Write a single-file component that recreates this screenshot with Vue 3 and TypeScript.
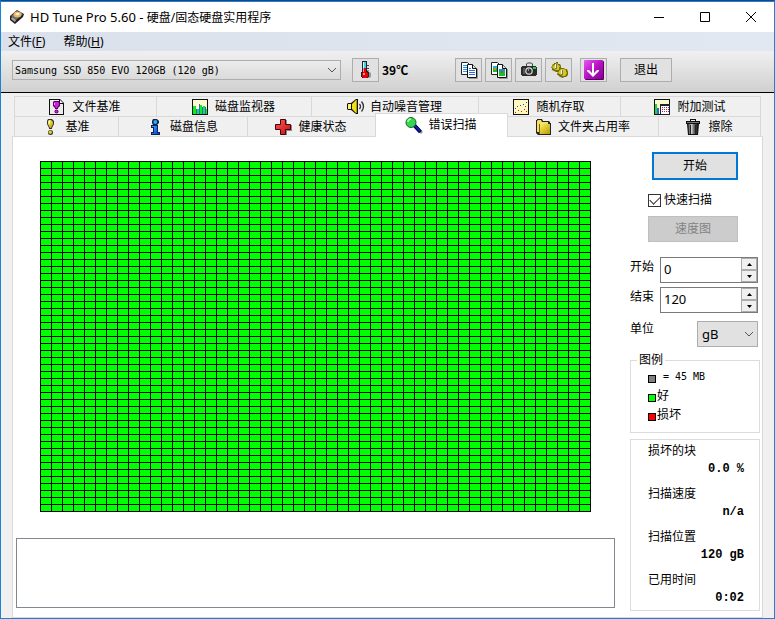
<script setup lang="ts">
import { ref } from 'vue'

interface Tab {
  id: string
  label: string
  icon: string
}

const upperTabs: Tab[] = [
  { id: 'file-benchmark', label: '文件基准', icon: 'file-bench' },
  { id: 'monitor', label: '磁盘监视器', icon: 'monitor' },
  { id: 'aam', label: '自动噪音管理', icon: 'speaker' },
  { id: 'random', label: '随机存取', icon: 'scatter' },
  { id: 'extra', label: '附加测试', icon: 'extra' },
]
const lowerTabs: Tab[] = [
  { id: 'benchmark', label: '基准', icon: 'exclaim' },
  { id: 'info', label: '磁盘信息', icon: 'info' },
  { id: 'health', label: '健康状态', icon: 'cross' },
  { id: 'error-scan', label: '错误扫描', icon: 'lens' },
  { id: 'folder', label: '文件夹占用率', icon: 'folder' },
  { id: 'erase', label: '擦除', icon: 'trash' },
]
const tools = [
  { icon: 'copy-text', label: '复制文本' },
  { icon: 'copy-image', label: '复制图像' },
  { icon: 'camera', label: '屏幕截图' },
  { icon: 'options', label: '选项' },
]
const stats = [
  { label: '损坏的块', value: '0.0 %' },
  { label: '扫描速度', value: 'n/a' },
  { label: '扫描位置', value: '120 gB' },
  { label: '已用时间', value: '0:02' },
]

const active = ref('error-scan')
const drive = ref('Samsung SSD 850 EVO 120GB (120 gB)')
const quickScan = ref(true)
const from = ref(0)
const to = ref(120)
const unit = ref('gB')
const blockCount = 50 * 50
</script>

<template>
  <div class="window">
    <svg class="sprite" aria-hidden="true">
      <defs>
        <linearGradient id="g-blue" x1="0" y1="0" x2="1" y2="1"><stop offset="0" stop-color="#39a8ff" /><stop offset="1" stop-color="#0038d0" /></linearGradient>
        <linearGradient id="g-yellow" x1="0" y1="0" x2="1" y2="1"><stop offset="0" stop-color="#fff36b" /><stop offset="1" stop-color="#b79a00" /></linearGradient>
        <linearGradient id="g-purple" x1="0" y1="0" x2="1" y2="1"><stop offset="0" stop-color="#e65af0" /><stop offset=".5" stop-color="#b812c4" /><stop offset="1" stop-color="#84008f" /></linearGradient>
        <linearGradient id="g-metal" x1="0" y1="0" x2="1" y2="0"><stop offset="0" stop-color="#333" /><stop offset=".35" stop-color="#ccc" /><stop offset=".6" stop-color="#666" /><stop offset="1" stop-color="#111" /></linearGradient>
        <linearGradient id="g-red" x1="0" y1="0" x2="1" y2="1"><stop offset="0" stop-color="#ff5a50" /><stop offset="1" stop-color="#c40d12" /></linearGradient>
      </defs>
      <symbol id="drive" viewBox="0 0 16 16">
        <path d="M1 7 8 1l7 4-1 3-8 7-5-4z" fill="#222" />
        <path d="m2 7 6-5 6 3-7 6z" fill="#75706a" />
        <ellipse cx="8.5" cy="5.500" rx="4" ry="3" fill="#e9b56c" /><ellipse cx="8.5" cy="5" rx="2" ry="1.3" fill="#fff2cf" />
        <path d="m2 10 4 3 1-2-4-3z" fill="#aaa" />
      </symbol>
      <symbol id="thermo" viewBox="0 0 18 18">
        <path d="M9 9h2v2l2 1v4l-2 1H9z" fill="#999" />
        <path d="M4 0h5v10h1v1h1v5h-1v1H4v-1H3v-5h1z" fill="#223" />
        <path d="M5 1h3v6H5z" fill="#35d5e8" /><path d="M5 1h1v6H5z" fill="#c9fbff" />
        <path d="M5 7h3v4h1v1h1v4H9v1H5v-1H4v-4h1z" fill="#e60000" /><path d="M5 12h2v2H5zM5 7h1v4H5z" fill="#ff8f86" />
        <path d="M9 7.500h2M9 4.500h2" stroke="#444" />
      </symbol>
      <symbol id="copy-text" viewBox="0 -1 18 18">
        <path d="M.5.5h6l2 2v10h-8z" fill="#fff" stroke="#222" /><path d="M2 3.5h4M2 5.500h4M2 7.500h4M2 9.500h4" stroke="#2496f2" />
        <path d="M6.500 2.500h5l4 4v9h-9z" fill="#fff" stroke="#111" /><path d="M16.500 7v9.500H8" fill="none" stroke="#999" /><path d="M11.500 2.500v4h4" fill="#ddd" stroke="#111" /><path d="M8 6.500h2M8 8.500h6M8 10.500h6M8 12.500h6" stroke="#286ee8" />
      </symbol>
      <symbol id="copy-image" viewBox="0 -1 18 18">
        <path d="M.5.5h6l2 2v10h-8z" fill="#fff" stroke="#222" /><path d="M2 4h4v6H2z" fill="#0ac52e" /><path d="M2 4h4v2H2z" fill="#17b9e8" /><path d="M3 6h2v2H3z" fill="#e38b0c" />
        <path d="M6.500 2.500h5l4 4v9h-9z" fill="#fff" stroke="#111" /><path d="M16.500 7v9.500H8" fill="none" stroke="#999" /><path d="M11.500 2.500v4h4" fill="#ddd" stroke="#111" /><path d="M8 7h6v7H8z" fill="#0ac52e" /><path d="M8 7h6v2H8z" fill="#168ee6" /><path d="M10 9h2v2h-2z" fill="#e33b0c" />
      </symbol>
      <symbol id="camera" viewBox="0 -1 18 18">
        <path d="M5.500 4V2l1-1h4l1 1v2" fill="none" stroke="#444" /><path d="M1 4h14v1h1v8h-1v1H1v-1H0V5h1z" fill="#2b2b2b" /><path d="M2 6h2v6H2z" fill="#555" />
        <circle cx="8" cy="9" r="3.800" fill="#ddd" /><circle cx="8" cy="9" r="2.600" fill="#333" /><path d="M7 7h1v2H7z" fill="#999" /><path d="M12 5h3v2h-3z" fill="#18d538" />
      </symbol>
      <symbol id="options" viewBox="0 -1 18 18">
        <path d="m1 4 1-2h1V1h2V0h2v2h2l1 2v2l-1 3-2 1H5L3 9 1 8V6H0zM7 9l1-2 2-1h3l1 1h2l1 3v3l-2 2h-2l-1 1-3-1-2-2H6z" fill="#756d00" />
        <path d="m2 4 1-1 3-2 1 2 2 1-1 2v2H5L3 7 1 5zM8 9l2-2h3l2 1v2l1 1-2 3h-2l-2-1-3-2z" fill="#d9c91c" />
        <path d="M4 2h2v5H4zM10 8h2v5h-2z" fill="#777" /><path d="M4 2h1v4H4zM10 8h1v4h-1z" fill="#eee" />
      </symbol>
      <symbol id="download" viewBox="0 0 20 20">
        <rect x="1" y="1" width="19" height="19" rx="1" fill="#5b0062" /><rect width="19" height="19" rx="1" fill="url(#g-purple)" />
        <path d="M8 3h2v10l3-3h2v1l-6 6-6-6v-1h2l3 3z" fill="#fff" />
      </symbol>
      <symbol id="file-bench" viewBox="0 -1 18 18">
        <path d="M0 0h11l4 4v12H0z" fill="#111" /><path d="M1 1h9v4h4v10H1z" fill="#ececec" /><path d="M11 1v3h3z" fill="#fff" />
        <path d="M5 2h5l1 1v4L9 9v1H6V9L4 7V3z" fill="#53005a" /><path d="M5 3h4l1 1v2L8 9H7L5 6z" fill="#d31bdf" /><circle cx="7.500" cy="12.500" r="2" fill="#53005a" /><circle cx="7.500" cy="12.500" r="1.200" fill="#d31bdf" /><path d="M5 4h1v2H5z" fill="#ffa0ff" />
      </symbol>
      <symbol id="monitor" viewBox="0 -1 18 18">
        <path d="M0 0h16v16H0z" fill="#111" /><path d="M1 1h14v14H1z" fill="#fffbd0" />
        <path d="M1 7h3v8H1zM5 10h2v5H5zM8 6h2v9H8zM11 7h2v8h-2zM14 10h1v5h-1z" fill="#08ef22" /><path d="M4 10h1v5H4zM7 5h1v10H7zM10 8h1v7h-1zM13 8h1v7h-1z" fill="#4355f2" />
      </symbol>
      <symbol id="speaker" viewBox="0 -1 18 18">
        <path d="M1 4h3l5-4h2v15H9l-5-4H1l-1-1V5z" fill="#111" /><path d="M1 5h3v5H1z" fill="#fff36b" /><path d="m5 5 4-4v13l-4-4z" fill="#f2df19" /><path d="M9 1h1v13H9z" fill="#b79a00" /><path d="M12.500 5q2 2.500 0 5M14.500 2.500q4 5 0 10" fill="none" stroke="#333" stroke-width="1.300" />
      </symbol>
      <symbol id="scatter" viewBox="0 -1 18 18">
        <path d="M0 0h16v16H0z" fill="#111" /><path d="M1 1h14v14H1z" fill="#fff9bd" />
        <path d="M2 9h1v1H2zM4 7h1v1H4zM7 6h1v1H7zM10 5h1v1h-1zM13 3h1v1h-1zM12 7h1v1h-1z" fill="#24e" /><path d="M2 13h1v1H2zM5 11h1v1H5zM8 12h1v1H8zM11 10h1v1h-1zM13 12h1v1h-1z" fill="#e11" />
      </symbol>
      <symbol id="extra" viewBox="0 -1 18 18">
        <path d="M0 0h16v16H0z" fill="#111" /><path d="M1 1h14v14H1z" fill="#fffbd0" /><path d="M1 5h2v10H1z" fill="#16dc2a" /><path d="M3 9h2v6H3z" fill="#4355f2" />
        <path d="M6 5h10v11H6z" fill="#222" /><path d="M7 7h8v8H7z" fill="#fff" /><path d="M8 8.500h7M8 10.500h7M8 12.500h7" stroke="#d12" stroke-dasharray="1 1" /><path d="M10 8.500h5M10 12.500h5" stroke="#35d" stroke-dasharray="1 3" />
      </symbol>
      <symbol id="exclaim" viewBox="0 -1 18 18">
        <path d="M6 0h4l2 2v3l-2 4v1H7V9L5 5V2z" fill="#333" /><path d="M7 1h2l2 2v2L9 9H8L6 5V2z" fill="url(#g-yellow)" /><circle cx="8.500" cy="13.500" r="2.500" fill="#333" /><circle cx="8.300" cy="13.200" r="1.600" fill="#e8d61c" /><path d="M7 2h1v3H7z" fill="#fffbc0" />
      </symbol>
      <symbol id="info" viewBox="0 -1 18 18">
        <path d="M6 0h4l2 2v2l-2 2H6L5 4V2zM4 6h7v7h2v3H4v-3h2V9H4z" fill="#102050" /><circle cx="8.300" cy="3" r="2" fill="#26aeea" /><path d="M5 7h5v7h2v1H5v-1h2V8H5z" fill="url(#g-blue)" />
      </symbol>
      <symbol id="cross" viewBox="0 -1 18 18">
        <path d="M6 1h6v5h5v6h-5v4H6z" fill="#888" /><path d="M5.500.5h5v5h5v5h-5v5h-5v-5h-5v-5h5z" fill="url(#g-red)" stroke="#401" />
      </symbol>
      <symbol id="lens" viewBox="0 -1 18 18">
        <path d="m10 9 7 7" stroke="#999" stroke-width="3" /><path d="m9 8 6.500 7" stroke="#00005c" stroke-width="4" /><path d="m9 8 6 6" stroke="#1220c8" stroke-width="1.500" /><circle cx="6" cy="5.500" r="5" fill="#35d84b" stroke="#176323" /><path d="M3 5q0-3 3-3" fill="none" stroke="#bcffc3" stroke-width="1.500" />
      </symbol>
      <symbol id="folder" viewBox="0 -1 18 18">
        <path d="M1 1h1V0h5l1 2h6l1 1v1h1v12H3l-2-2z" fill="#222" /><path d="M2 3V2l1-1h3l1 2h6v2H4v8H2z" fill="#f7df62" /><path d="M4 5h11v10H4z" fill="url(#g-yellow)" /><path d="M4 5h1v10H4z" fill="#7b6204" />
      </symbol>
      <symbol id="trash" viewBox="0 -1 18 18">
        <path d="M1 2h4V0h6v2h4v3h-1l-1 11H3L2 5H1z" fill="#111" /><path d="M6 1h4v1H6z" fill="#eee" /><path d="M3 5h10l-1 10H4z" fill="url(#g-metal)" /><path d="M2 3.500h12" stroke="#777" /><path d="M5.500 6v9M10.500 6v9" stroke="#222" />
      </symbol>
    </svg>

    <header class="titlebar">
      <svg class="app-icon"><use href="#drive" /></svg>
      <h1><span>HD Tune Pro 5.60 - </span>硬盘/固态硬盘实用程序</h1>
      <button class="caption" aria-label="最小化"><svg viewBox="0 0 12 12"><path d="M1 6.500h10" /></svg></button>
      <button class="caption" aria-label="最大化"><svg viewBox="0 0 12 12"><path d="M1.500 1.500h9v9h-9z" /></svg></button>
      <button class="caption" aria-label="关闭"><svg viewBox="0 0 12 12"><path d="m1 1 10 10M11 1 1 11" /></svg></button>
    </header>

    <nav class="menu">
      <button>文件(<u>F</u>)</button>
      <button>帮助(<u>H</u>)</button>
    </nav>

    <div class="toolbar">
      <div class="drop drive">
        <select v-model="drive" aria-label="驱动器"><option>Samsung SSD 850 EVO 120GB (120 gB)</option></select>
        <svg viewBox="0 0 10 6"><path d="m1 1 4 4 4-4" /></svg>
      </div>
      <button class="tool" aria-label="温度"><svg class="ico"><use href="#thermo" /></svg></button>
      <output class="temp">39℃</output>
      <div class="tools">
        <button v-for="t in tools" :key="t.icon" class="tool" :aria-label="t.label"><svg class="ico"><use :href="'#' + t.icon" /></svg></button>
      </div>
      <button class="tool save" aria-label="保存"><svg class="ico"><use href="#download" /></svg></button>
      <button class="exit">退出</button>
    </div>

    <main class="body">
      <div class="tabs" role="tablist">
        <div class="row upper">
          <button v-for="t in upperTabs" :key="t.id" role="tab" class="tab" :aria-selected="active === t.id" @click="active = t.id">
            <svg class="ico"><use :href="'#' + t.icon" /></svg>{{ t.label }}
          </button>
        </div>
        <div class="row lower">
          <button v-for="t in lowerTabs" :key="t.id" role="tab" class="tab" :class="{ active: active === t.id }" :aria-selected="active === t.id" @click="active = t.id">
            <svg class="ico"><use :href="'#' + t.icon" /></svg>{{ t.label }}
          </button>
        </div>
      </div>

      <section class="panel">
        <div class="scan">
          <div class="board"><i v-for="n in blockCount" :key="n"></i></div>
          <div class="log"></div>
        </div>

        <aside class="side">
          <div class="actions">
            <button class="start">开始</button>
            <label class="check">
              <input v-model="quickScan" type="checkbox" />
              <span>快速扫描</span>
            </label>
            <button class="speed" disabled>速度图</button>
          </div>

          <div class="form">
            <label for="from">开始</label>
            <div class="spin">
              <input id="from" v-model.number="from" type="text" />
              <button aria-label="增加开始" @click="from++"><svg viewBox="0 0 5 3"><path d="M0 3h5L2.500 0z" /></svg></button>
              <button aria-label="减少开始" @click="from--"><svg viewBox="0 0 5 3"><path d="M0 0h5L2.500 3z" /></svg></button>
            </div>
            <label for="to">结束</label>
            <div class="spin">
              <input id="to" v-model.number="to" type="text" />
              <button aria-label="增加结束" @click="to++"><svg viewBox="0 0 5 3"><path d="M0 3h5L2.500 0z" /></svg></button>
              <button aria-label="减少结束" @click="to--"><svg viewBox="0 0 5 3"><path d="M0 0h5L2.500 3z" /></svg></button>
            </div>
            <label for="unit">单位</label>
            <div class="drop unit">
              <select id="unit" v-model="unit"><option>gB</option></select>
              <svg viewBox="0 0 10 6"><path d="m1 1 4 4 4-4" /></svg>
            </div>
          </div>

          <fieldset class="legend">
            <legend>图例</legend>
            <ul>
              <li><b class="swatch size"></b><span class="mono">= 45 MB</span></li>
              <li><b class="swatch good"></b>好</li>
              <li><b class="swatch bad"></b>损坏</li>
            </ul>
          </fieldset>

          <dl class="stats">
            <div v-for="s in stats" :key="s.label">
              <dt>{{ s.label }}</dt>
              <dd>{{ s.value }}</dd>
            </div>
          </dl>
        </aside>
      </section>
    </main>
  </div>
</template>

<style>
body {
  margin: 0;
}
</style>

<style scoped>
* {
  box-sizing: border-box;
}
.window {
  display: flex;
  flex-direction: column;
  min-height: 100vh;
  border: 1px solid #1883d7;
  border-top-color: #243f7c;
  background: #f0f0f0;
  color: #000;
  font: 12px/16px 'Noto Sans', 'Noto Sans CJK SC', sans-serif;
}
button,
input,
select {
  margin: 0;
  padding: 0;
  font: inherit;
  color: inherit;
  border-radius: 0;
}
.sprite {
  position: absolute;
  width: 0;
  height: 0;
}
.titlebar {
  display: flex;
  align-items: center;
  height: 31px;
  padding-left: 8px;
  border-top: 1px solid #1883d7;
  background: #fff;
}
.app-icon {
  width: 16px;
  height: 16px;
}
h1 {
  flex: 1;
  margin: 0 0 0 5px;
  font-size: 12px;
  font-weight: 400;
  white-space: nowrap;
}
h1 span {
  font-size: 13px;
}
.caption {
  display: grid;
  place-items: center;
  width: 46px;
  height: 28px;
  border: 0;
  background: none;
}
.caption svg {
  width: 12px;
  height: 12px;
  fill: none;
  stroke: #000;
}
.menu {
  display: flex;
  gap: 18px;
  height: 19px;
  padding-left: 7px;
  background: linear-gradient(90deg, #dae1eb, #e1e8f1);
}
.menu button {
  border: 0;
  background: none;
}
.toolbar {
  display: flex;
  align-items: flex-start;
  height: 42px;
  padding: 7px 102px 0 11px;
  border-bottom: 1px solid #000;
  background: linear-gradient(#f0f0f0, #d0d0d0);
}
.drop {
  position: relative;
  display: flex;
}
.drop select {
  width: 100%;
  padding: 0 4px;
  border: 1px solid #adadad;
  background: #e1e1e1;
  appearance: none;
}
.drop svg {
  position: absolute;
  right: 4px;
  top: 50%;
  width: 10px;
  height: 6px;
  margin-top: -3px;
  fill: none;
  stroke: #555;
  pointer-events: none;
}
.drive {
  flex: 1;
  height: 20px;
  margin: 2px 11px 0 0;
}
.drive select {
  padding: 1px 2px 0;
  background: linear-gradient(#ececec, #dadada);
  font: 10px/16px 'DejaVu Sans Mono', monospace;
}
.tool,
.exit,
.speed {
  border: 1px solid #adadad;
  background: #e1e1e1;
}
.tool {
  display: flex;
  width: 27px;
  height: 24px;
  padding: 2px 0 0 5px;
}
.ico {
  flex: none;
  width: 18px;
  height: 18px;
}
.save {
  padding: 1px 0 0 3px;
}
.save .ico {
  width: 20px;
  height: 20px;
}
.temp {
  width: 76px;
  padding: 4px 0 0 3px;
  font-family: 'Noto Sans CJK SC', sans-serif;
  font-weight: 700;
}
.tools {
  display: flex;
  gap: 3px;
  margin-right: 8px;
}
.exit {
  width: 52px;
  height: 24px;
  margin-left: 13px;
}
.body {
  display: flex;
  flex: 1;
  flex-direction: column;
  padding: 3px 11px 0;
}
.tabs {
  padding: 0 2px;
}
.row {
  display: grid;
  border-left: 1px solid #d9d9d9;
}
.upper {
  grid-template-columns: 142fr 155fr 167fr 142fr 140fr;
  border-top: 1px solid #d9d9d9;
}
.lower {
  grid-template-columns: 104fr 129fr 128fr 132fr 151fr 102fr;
}
.tab {
  display: flex;
  align-items: center;
  justify-content: center;
  gap: 5px;
  height: 20px;
  padding-right: 1px;
  border: 0;
  border-right: 1px solid #d9d9d9;
  background: #f0f0f0;
  white-space: nowrap;
}
.upper .tab {
  height: 19px;
}
.lower .tab {
  border-top: 1px solid #d9d9d9;
}
.lower .active {
  z-index: 1;
  height: 24px;
  margin: -3px 0 -1px -1px;
  padding-bottom: 2px;
  border-left: 1px solid #d9d9d9;
  background: #fff;
}
.panel {
  display: flex;
  flex: 1;
  gap: 15px;
  padding: 0 2px 0 3px;
  border: 1px solid #d9d9d9;
  background: #fff;
}
.scan {
  display: flex;
  flex: 1;
  flex-direction: column;
  padding-bottom: 9px;
}
.board {
  display: grid;
  grid-template-columns: repeat(50, 1fr);
  grid-auto-rows: 6px;
  gap: 1px;
  margin: 24px 24px 26px;
  padding: 1px;
  background: #000;
}
.board i {
  background: #0f0;
}
.log {
  flex: 1;
  min-height: 64px;
  border: 1px solid #828790;
}
.side {
  width: 130px;
  padding: 15px 0 6px;
}
.actions {
  display: grid;
  padding: 0 22px 0 18px;
}
.start {
  height: 28px;
  margin-left: 4px;
  border: 2px solid #0078d7;
  background: #e1e1e1;
}
.check {
  display: flex;
  align-items: center;
  gap: 3px;
  height: 16px;
  margin: 12px 0 8px;
}
.check input {
  width: 13px;
  height: 13px;
  border: 1px solid #333;
  background: #fff;
  appearance: none;
}
.check input:checked::before {
  content: '';
  display: block;
  width: 9px;
  height: 5px;
  margin: 1px 0 0 1px;
  border: solid #333;
  border-width: 0 0 1px 1px;
  transform: rotate(-45deg);
}
.speed {
  height: 26px;
  border-color: #bfbfbf;
  background: #ccc;
  color: #838383;
}
.form {
  display: grid;
  grid-template-columns: 30px 1fr;
  gap: 4px 0;
  padding: 15px 2px 6px 0;
}
.form label {
  padding-top: 2px;
}
.spin {
  display: grid;
  grid-template-columns: 1fr 16px;
  grid-template-rows: 12px 12px;
  height: 26px;
  border: 1px solid #7a7a7a;
}
.spin input {
  grid-row: 1 / 3;
  width: 100%;
  padding: 0 3px 3px;
  border: 0;
  outline: 0;
  font-size: 13px;
}
.spin button {
  display: grid;
  place-items: center;
  border: 1px solid #adadad;
  background: #f0f0f0;
}
.spin svg {
  width: 5px;
  height: 3px;
}
.unit {
  height: 26px;
  margin: 4px 0 0 37px;
}
.unit select {
  font-size: 13px;
}
.form label:last-of-type {
  padding-top: 4px;
}
.legend {
  min-width: 0;
  margin: 0;
  padding: 0 0 8px 17px;
  border: 1px solid #dcdcdc;
}
.legend legend {
  margin-left: -11px;
  padding: 0 2px;
  line-height: 14px;
}
.legend ul {
  margin: 0;
  padding: 0;
  list-style: none;
}
.legend li {
  display: flex;
  align-items: center;
  gap: 1px;
  height: 19px;
}
.swatch {
  width: 8px;
  height: 8px;
  margin-top: 5px;
  border: 1px solid #000;
}
.size {
  background: #808080;
}
.good {
  background: #0f0;
}
.bad {
  background: #f00;
}
.mono {
  padding-left: 6px;
  font: 10px/16px 'DejaVu Sans Mono', monospace;
}
.stats {
  display: grid;
  gap: 7px;
  margin: 6px 0 0;
  padding: 2px 15px 3px 17px;
  border: 1px solid #dcdcdc;
}
.stats dt {
  line-height: 18px;
}
.stats dd {
  margin: 0;
  font: 700 12px/18px 'Liberation Mono', monospace;
  text-align: right;
}
</style>
